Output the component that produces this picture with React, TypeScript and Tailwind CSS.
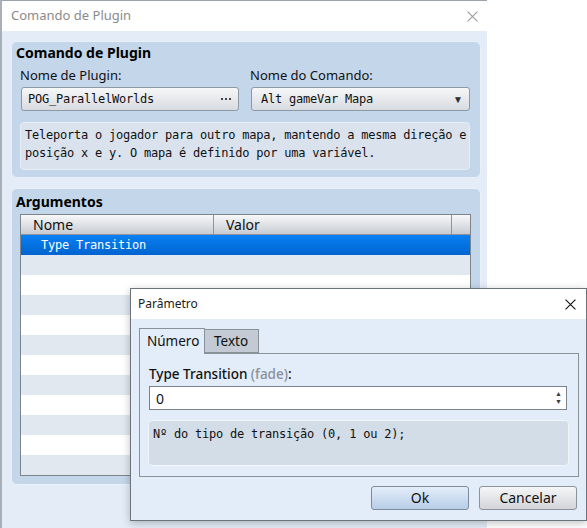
import React from 'react';

const ui = "font-['Noto_Sans',sans-serif] text-[#111]";
const mono = "font-['DejaVu_Sans_Mono',monospace] text-[12px] tracking-[-0.22px]";

const rows = Array.from({ length: 11 }, (_, i) => i);

function CloseIcon({ color, size }: { color: string; size: number }) {
  return (
    <svg width={size} height={size} viewBox="0 0 10 10">
      <path d="M0.5 0.5 L9.5 9.5 M9.5 0.5 L0.5 9.5" stroke={color} strokeWidth="1" fill="none" />
    </svg>
  );
}

export default function App() {
  return (
    <div className={`relative w-[587px] h-[528px] bg-white overflow-hidden ${ui}`}>
      {/* main window */}
      <div className="flex w-[487px] h-[528px]">
        <div className="w-[2px] h-full bg-[#a9afb6]" />
        <div className="flex-1 flex flex-col border-t border-[#9aa2ab]">
          <div className="h-[30px] bg-white flex items-center justify-between pl-[9px] pr-[9px]">
            <span className="text-[13px] text-[#8b8b8b]">Comando de Plugin</span>
            <CloseIcon color="#9a9a9a" size={11} />
          </div>
          <div className="flex-1 bg-[#e3ecf7] pt-[10px] pl-[9px]">
            {/* group 1 */}
            <div className="w-[470px] h-[137px] rounded-[6px] border border-[#e9f0f8] bg-[#c4d6ea]">
              <div className="h-[24px] pt-[1px] pl-[4px] text-[14px] font-bold leading-[20px] text-black">
                Comando de Plugin
              </div>
              <div className="h-[20px] flex text-[13px] leading-[18px] pl-[8px]">
                <span className="w-[230px]">Nome de Plugin:</span>
                <span>Nome do Comando:</span>
              </div>
              <div className="mt-[1px] flex gap-[12px] pl-[9px]">
                <div className="w-[218px] h-[24px] rounded-[3px] border border-[#8e99a6] bg-linear-to-b from-[#f6f7f8] to-[#d8dbe0] flex items-center justify-between pl-[6px] pr-[7px]">
                  <span className={mono}>POG_ParallelWorlds</span>
                  <span className="flex gap-[2px]">
                    <span className="w-[2px] h-[2px] bg-[#444]" />
                    <span className="w-[2px] h-[2px] bg-[#444]" />
                    <span className="w-[2px] h-[2px] bg-[#444]" />
                  </span>
                </div>
                <div className="w-[219px] h-[24px] rounded-[3px] border border-[#8e99a6] bg-linear-to-b from-[#f6f7f8] to-[#d8dbe0] flex items-center justify-between pl-[9px] pr-[6px]">
                  <span className={mono}>Alt gameVar Mapa</span>
                  <span className="text-[10px] text-[#2c3036]">▼</span>
                </div>
              </div>
              <div className={`mt-[11px] ml-[8px] w-[450px] h-[48px] rounded-[4px] border border-[#e6edf5] bg-[#d9e2ed] pl-[4px] pt-[3px] leading-[18px] ${mono}`}>
                Teleporta o jogador para outro mapa, mantendo a mesma direção e
                <br />
                posição x e y. O mapa é definido por uma variável.
              </div>
            </div>

            {/* group 2 */}
            <div className="mt-[10px] w-[470px] h-[297px] rounded-[6px] border border-[#e9f0f8] bg-[#c4d6ea]">
              <div className="h-[25px] pt-[3px] pl-[4px] text-[14px] font-bold leading-[20px] text-black">
                Argumentos
              </div>
              <div className="ml-[8px] w-[451px] h-[262px] border border-[#7d848c] bg-white flex flex-col">
                <div className="h-[20px] flex border-b border-[#8d949c] bg-linear-to-b from-[#f7f8f9] to-[#c8ccd2] text-[14px] leading-[19px]">
                  <div className="w-[193px] border-r border-[#8d949c] pl-[12px]">Nome</div>
                  <div className="w-[238px] border-r border-[#8d949c] pl-[12px]">Valor</div>
                  <div className="flex-1" />
                </div>
                <div className="h-[20px] bg-linear-to-b from-[#0a80f5] to-[#0064cf] pl-[20px] flex items-center">
                  <span className={`${mono} text-white`}>Type Transition</span>
                </div>
                {rows.map((i) => (
                  <div key={i} className={i % 2 === 0 ? 'h-[20px] bg-[#e2e8f0]' : 'h-[20px] bg-white'} />
                ))}
              </div>
            </div>
          </div>
        </div>
      </div>

      {/* parameter dialog */}
      <div className="absolute left-[130px] top-[288px] w-[457px] h-[233px] border border-[#6d737a] shadow-[0_2px_8px_rgba(0,0,0,0.25)] flex flex-col">
        <div className="h-[30px] bg-white flex items-center justify-between pl-[7px] pr-[10px]">
          <span className="text-[12px] text-[#1b1b1b]">Parâmetro</span>
          <CloseIcon color="#111" size={11} />
        </div>
        <div className="flex-1 bg-[#e2edf9] pt-[9px] pl-[8px] pr-[8px]">
          <div className="flex items-end">
            <div className="relative z-10 -mb-px w-[66px] h-[26px] border border-b-0 border-[#8a9299] bg-[#e2edf9] text-[13.5px] leading-[24px] pl-[7px]">
              Número
            </div>
            <div className="w-[54px] h-[24px] border border-l-0 border-[#8a9299] bg-[#c3cad3] text-[13.5px] leading-[22px] pl-[9px]">
              Texto
            </div>
          </div>
          <div className="w-[440px] h-[124px] border border-[#8a9299] pt-[11px] pl-[9px]">
            <div className="text-[13.5px] leading-[18px] font-medium">
              Type Transition <span className="text-[#8a9097]">(fade)</span>:
            </div>
            <div className="mt-[3px] w-[418px] h-[24px] border border-[#7a828b] bg-white flex items-center justify-between pl-[6px] pr-[4px]">
              <span className="text-[14px]">0</span>
              <div className="flex flex-col text-[7px] leading-[8px] text-[#3b4047]">
                <span>▲</span>
                <span>▼</span>
              </div>
            </div>
            <div className={`mt-[10px] -ml-px w-[421px] h-[46px] rounded-[4px] border border-[#f0f5fa] bg-[#d3dde8] pl-[4px] pt-[4px] leading-[18px] ${mono}`}>
              Nº do tipo de transição (0, 1 ou 2);
            </div>
          </div>
          <div className="mt-[9px] flex justify-end gap-[10px] pr-[1px]">
            <button className="w-[98px] h-[24px] rounded-[3px] border border-[#7f8c9a] bg-linear-to-b from-[#e4eefa] to-[#b7cde6] text-[14px] leading-[20px]">
              Ok
            </button>
            <button className="w-[98px] h-[24px] rounded-[3px] border border-[#8d939a] bg-linear-to-b from-[#f5f6f7] to-[#d2d5d9] text-[14px] leading-[20px]">
              Cancelar
            </button>
          </div>
        </div>
      </div>
    </div>
  );
}
